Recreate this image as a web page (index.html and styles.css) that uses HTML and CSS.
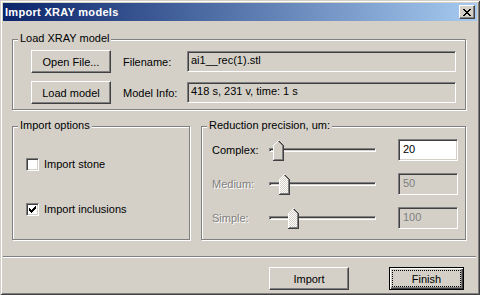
FILE: index.html
```html
<!DOCTYPE html>
<html>
<head>
<meta charset="utf-8">
<title>Import XRAY models</title>
<link rel="stylesheet" href="styles.css">
</head>
<body>
<div class="window">
  <div class="titlebar">
    <span class="title">Import XRAY models</span>
    <button class="close-btn" aria-label="Close">
      <svg width="8" height="7" viewBox="0 0 8 7" shape-rendering="crispEdges"><path fill="#000" d="M0 0h2v1h-2zM6 0h2v1h-2zM1 1h2v1h-2zM5 1h2v1h-2zM2 2h4v1h-4zM3 3h2v1h-2zM2 4h4v1h-4zM1 5h2v1h-2zM5 5h2v1h-2zM0 6h2v1h-2zM6 6h2v1h-2z"/></svg>
    </button>
  </div>
  <div class="client">
    <div class="group group-load">
      <span class="legend">Load XRAY model</span>
      <div class="load-grid">
        <button class="btn">Open File...</button>
        <span class="field-label">Filename:</span>
        <div class="field">ai1__rec(1).stl</div>
        <button class="btn">Load model</button>
        <span class="field-label">Model Info:</span>
        <div class="field">418 s, 231 v, time: 1 s</div>
      </div>
    </div>

    <div class="groups-row">
      <div class="group group-options">
        <span class="legend">Import options</span>
        <div class="check-list">
          <label class="check-row">
            <span class="checkbox"></span>
            <span>Import stone</span>
          </label>
          <label class="check-row">
            <span class="checkbox">
              <svg width="9" height="9" viewBox="0 0 9 9" shape-rendering="crispEdges"><path fill="#000" d="M7 1h1v1h-1zM6 2h2v1h-2zM1 3h1v1h-1zM5 3h3v1h-3zM1 4h2v1h-2zM4 4h3v1h-3zM1 5h5v1h-5zM2 6h3v1h-3zM3 7h1v1h-1z"/></svg>
            </span>
            <span>Import inclusions</span>
          </label>
        </div>
      </div>

      <div class="group group-precision">
        <span class="legend">Reduction precision, um:</span>
        <div class="slider-list">
          <div class="slider-row">
            <span class="slider-label">Complex:</span>
            <div class="slider">
              <div class="track"></div>
              <svg class="thumb" style="left:4px" width="11" height="21" viewBox="0 0 11 21" shape-rendering="crispEdges">
                <polygon points="0,5 5,0 6,0 11,5 11,21 0,21" fill="#d4d0c8"/>
                <path d="M5.5 1.5L9.5 5.5V19.5H1" fill="none" stroke="#808080"/>
                <path d="M5.5 0.5L10.5 5.5V20.5H0" fill="none" stroke="#404040"/>
                <path d="M0.5 20V5.5L5.5 0.5" fill="none" stroke="#fff"/>
              </svg>
            </div>
            <div class="edit">20</div>
          </div>
          <div class="slider-row disabled">
            <span class="slider-label">Medium:</span>
            <div class="slider">
              <div class="track"></div>
              <svg class="thumb" style="left:10px" width="11" height="21" viewBox="0 0 11 21" shape-rendering="crispEdges">
                <defs>
                  <pattern id="dither" width="2" height="2" patternUnits="userSpaceOnUse">
                    <rect width="2" height="2" fill="#fff"/>
                    <rect width="1" height="1" fill="#d4d0c8"/>
                    <rect x="1" y="1" width="1" height="1" fill="#d4d0c8"/>
                  </pattern>
                </defs>
                <polygon points="0,5 5,0 6,0 11,5 11,21 0,21" fill="url(#dither)"/>
                <path d="M5.5 1.5L9.5 5.5V19.5H1" fill="none" stroke="#808080"/>
                <path d="M5.5 0.5L10.5 5.5V20.5H0" fill="none" stroke="#404040"/>
                <path d="M0.5 20V5.5L5.5 0.5" fill="none" stroke="#fff"/>
              </svg>
            </div>
            <div class="edit">50</div>
          </div>
          <div class="slider-row disabled">
            <span class="slider-label">Simple:</span>
            <div class="slider">
              <div class="track"></div>
              <svg class="thumb" style="left:19px" width="11" height="21" viewBox="0 0 11 21" shape-rendering="crispEdges">
                <polygon points="0,5 5,0 6,0 11,5 11,21 0,21" fill="url(#dither)"/>
                <path d="M5.5 1.5L9.5 5.5V19.5H1" fill="none" stroke="#808080"/>
                <path d="M5.5 0.5L10.5 5.5V20.5H0" fill="none" stroke="#404040"/>
                <path d="M0.5 20V5.5L5.5 0.5" fill="none" stroke="#fff"/>
              </svg>
            </div>
            <div class="edit">100</div>
          </div>
        </div>
      </div>
    </div>

    <div class="separator"></div>

    <div class="actions">
      <button class="btn">Import</button>
      <button class="btn btn-default">Finish</button>
    </div>
  </div>
</div>
</body>
</html>
```

FILE: styles.css
```css
* { box-sizing: border-box; }
html, body { margin: 0; padding: 0; }
body {
  font-family: "Liberation Sans", Arial, sans-serif;
  font-size: 11px;
  color: #000;
  background: #d4d0c8;
}

.window {
  width: 480px;
  height: 295px;
  padding: 3px;
  background: #d4d0c8;
  display: flex;
  flex-direction: column;
  box-shadow: inset 1px 1px 0 #d4d0c8, inset -1px -1px 0 #404040,
              inset 2px 2px 0 #fff, inset -2px -2px 0 #808080;
}

.titlebar {
  flex: none;
  height: 18px;
  display: flex;
  align-items: center;
  justify-content: space-between;
  padding: 0 2px;
  background: linear-gradient(to right, #0a246a, #a6caf0);
}
.title {
  color: #fff;
  font-weight: bold;
  letter-spacing: 0.3px;
  line-height: 18px;
}
.close-btn {
  width: 16px;
  height: 14px;
  margin: 0;
  padding: 0;
  background: #d4d0c8;
  border: 1px solid;
  border-color: #fff #404040 #404040 #fff;
  box-shadow: inset -1px -1px 0 #808080;
  display: flex;
  align-items: center;
  justify-content: center;
}
.close-btn svg { display: block; }

.client {
  flex: 1;
  padding: 18px 0 0 9px;
}

.group {
  position: relative;
  border: 1px solid #808080;
  box-shadow: 1px 1px 0 #fff, inset 1px 1px 0 #fff;
}
.legend {
  position: absolute;
  top: -8px;
  left: 5px;
  padding: 0 2px;
  line-height: 13px;
  background: #d4d0c8;
  white-space: nowrap;
}

.group-load {
  width: 454px;
  height: 71px;
  padding: 10px 0 0 18px;
}
.load-grid {
  display: grid;
  grid-template-columns: 80px 76px 269px;
  grid-auto-rows: 23px;
  row-gap: 8px;
  align-items: center;
}
.field-label {
  padding-left: 12px;
  white-space: nowrap;
}
.field {
  height: 21px;
  padding: 0 3px;
  line-height: 17px;
  white-space: nowrap;
  border: 1px solid;
  border-color: #808080 #fff #fff #808080;
  box-shadow: inset 1px 1px 0 #404040, inset -1px -1px 0 #d4d0c8;
  background: #d4d0c8;
}

.btn {
  font: inherit;
  color: #000;
  width: 80px;
  height: 23px;
  margin: 0;
  padding: 0;
  background: #d4d0c8;
  border: 1px solid;
  border-color: #fff #404040 #404040 #fff;
  box-shadow: inset -1px -1px 0 #808080;
}
.btn-default {
  width: 75px;
  border-color: #000;
  box-shadow: inset 1px 1px 0 #fff, inset -1px -1px 0 #404040, inset -2px -2px 0 #808080;
  outline: 1px dotted #000;
  outline-offset: -4px;
}

.groups-row {
  display: flex;
  gap: 11px;
  margin-top: 16px;
}
.group-options {
  width: 178px;
  height: 114px;
  padding: 31px 0 0 13px;
}
.check-list {
  display: flex;
  flex-direction: column;
  gap: 32px;
}
.check-row {
  display: flex;
  align-items: center;
  gap: 5px;
  height: 13px;
  line-height: 13px;
}
.checkbox {
  width: 13px;
  height: 13px;
  flex: none;
  padding: 1px;
  background: #fff;
  border: 1px solid;
  border-color: #808080 #fff #fff #808080;
  box-shadow: inset 1px 1px 0 #404040, inset -1px -1px 0 #d4d0c8;
}
.checkbox svg { display: block; }

.group-precision {
  width: 265px;
  height: 114px;
  padding: 12px 0 0 10px;
}
.slider-list {
  display: flex;
  flex-direction: column;
  gap: 12px;
}
.slider-row {
  display: flex;
  align-items: center;
  height: 22px;
}
.slider-label {
  width: 57px;
  white-space: nowrap;
}
.slider {
  position: relative;
  width: 107px;
  height: 21px;
  display: flex;
  align-items: center;
}
.track {
  width: 100%;
  height: 4px;
  border: 1px solid;
  border-color: #808080 #fff #fff #808080;
  box-shadow: inset 1px 1px 0 #404040;
}
.thumb {
  position: absolute;
  top: 0;
  display: block;
}
.edit {
  width: 60px;
  height: 22px;
  margin-left: 22px;
  padding: 0 4px;
  line-height: 18px;
  background: #fff;
  border: 1px solid;
  border-color: #808080 #fff #fff #808080;
  box-shadow: inset 1px 1px 0 #404040, inset -1px -1px 0 #d4d0c8;
}
.disabled .slider-label {
  color: #808080;
  text-shadow: 1px 1px 0 #fff;
}
.disabled .edit {
  background: #d4d0c8;
  color: #808080;
}

.separator {
  height: 2px;
  margin: 16px 1px 0 -9px;
  border-top: 1px solid #808080;
  border-bottom: 1px solid #fff;
}

.actions {
  display: flex;
  justify-content: flex-end;
  gap: 40px;
  margin-top: 9px;
  padding-right: 13px;
}
```
